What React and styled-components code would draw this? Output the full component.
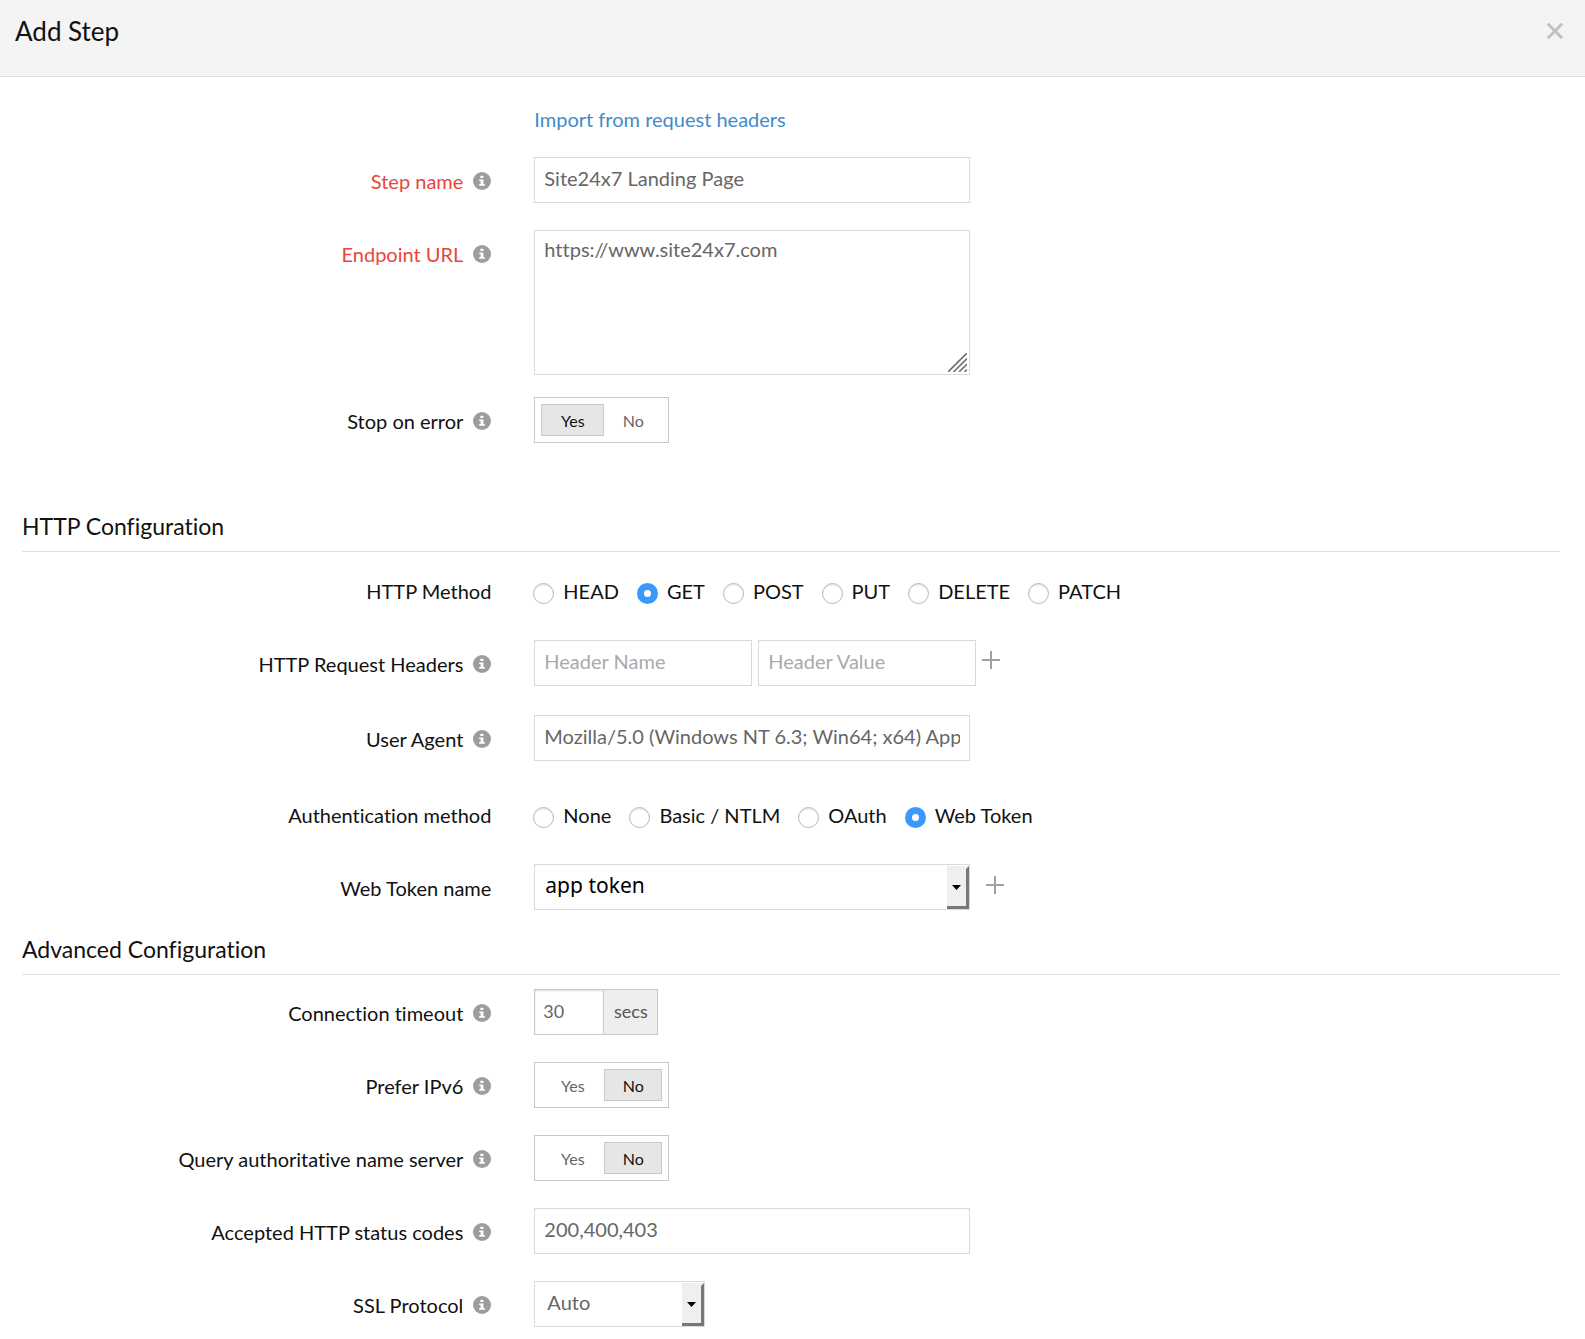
import React, { useState } from "react";
import styled, { createGlobalStyle } from "styled-components";

const GlobalStyle = createGlobalStyle`
  *, *::before, *::after { box-sizing: border-box; }
  body {
    margin: 0;
    background: #fff;
    color: #111;
    font-family: Lato, "Open Sans", sans-serif;
    font-size: 20px;
    line-height: 24px;
    font-variant-ligatures: none;
  }
  button, input, select, textarea {
    font: inherit;
    font-variant-ligatures: none;
    color: inherit;
    margin: 0;
    border-radius: 0;
  }
`;

const Header = styled.header`
  display: flex;
  align-items: flex-start;
  justify-content: space-between;
  height: 77px;
  padding: 16px 15px 0;
  background: #f4f4f4;
  border-bottom: 1px solid #e0e0e0;
`;

const Title = styled.h1`
  margin: 0;
  font-size: 26px;
  line-height: 30px;
  font-weight: 400;
`;

const IconButton = styled.button`
  display: flex;
  align-items: center;
  justify-content: center;
  width: 30px;
  height: 30px;
  padding: 0;
  border: 0;
  background: none;
  cursor: pointer;
`;

const ImportRow = styled.div`
  padding: 30px 0 26px calc(31% + 43px);
`;

const ImportLink = styled.a`
  color: #428bca;
  text-decoration: none;
`;

const Rows = styled.div`
  display: flex;
  flex-direction: column;
  gap: ${(p) => p.$gap}px;
`;

const Section = styled.section`
  margin-top: ${(p) => p.$top}px;
`;

const SectionTitle = styled.h2`
  margin: 0 25px 14px 22px;
  padding-bottom: 11px;
  border-bottom: 1px solid #e0e0e0;
  font-size: 23px;
  line-height: 28px;
  font-weight: 400;
`;

const Row = styled.div`
  display: grid;
  grid-template-columns: 31% 1fr;
  column-gap: 43px;
  align-items: start;
  padding-top: ${(p) => (p.$radios ? 9 : 0)}px;
  margin-bottom: ${(p) => (p.$tight ? -5 : 0)}px;
`;

const LabelCell = styled.div`
  display: flex;
  align-items: center;
  justify-content: flex-end;
  gap: 10px;
  height: ${(p) => (p.$radios ? 32 : 48)}px;
  margin-bottom: ${(p) => (p.$radios ? 0 : -2)}px;
  color: ${(p) => (p.$required ? "#e8463c" : "#111")};
  text-align: right;
`;

const InfoButton = styled.button`
  display: flex;
  padding: 0;
  border: 0;
  background: none;
  cursor: help;
`;

const Control = styled.div`
  display: flex;
  align-items: flex-start;
`;

const TextInput = styled.input`
  width: ${(p) => p.$width}px;
  height: 46px;
  padding: 0 9px 4px;
  border: 1px solid #d9d9d9;
  background: #fff;
  color: #666;
  outline: none;
  &::placeholder { color: #aaa; opacity: 1; }
`;

const AreaWrap = styled.div`
  position: relative;
  width: 436px;
`;

const TextArea = styled.textarea`
  display: block;
  width: 100%;
  height: 145px;
  padding: 6px 9px;
  border: 1px solid #d9d9d9;
  color: #666;
  outline: none;
  resize: none;
`;

const Grip = styled.svg`
  position: absolute;
  right: 3px;
  bottom: 3px;
`;

const ToggleBox = styled.div`
  display: flex;
  align-items: center;
  height: 46px;
  padding: 0 6px;
  border: 1px solid #c8c8c8;
`;

const ToggleButton = styled.button`
  width: ${(p) => p.$width}px;
  height: 32px;
  padding: 2px 0 0;
  border: 1px solid ${(p) => (p.$on ? "#c8c8c8" : "transparent")};
  background: ${(p) => (p.$on ? "#e6e6e6" : "transparent")};
  color: ${(p) => (p.$on ? "#111" : "#666")};
  font-size: 16px;
  line-height: 20px;
  cursor: pointer;
`;

const RadioList = styled.div`
  display: flex;
  flex-wrap: wrap;
  gap: 18px;
  height: 36px;
  margin-left: -1px;
`;

const RadioLabel = styled.label`
  display: flex;
  align-items: center;
  gap: 9px;
  height: 32px;
  cursor: pointer;
`;

const Radio = styled.input`
  appearance: none;
  width: 21px;
  height: 21px;
  margin: 4px 0 0;
  border: 1px solid #b9b9b9;
  border-radius: 50%;
  background: #fff;
  box-shadow: inset 0 1px 1px #ddd;
  &:checked {
    border: 7px solid #3b99fc;
    box-shadow: none;
  }
`;

const SelectWrap = styled.div`
  position: relative;
  width: ${(p) => p.$width}px;
`;

const Select = styled.select`
  appearance: none;
  display: block;
  width: 100%;
  height: 46px;
  padding: ${(p) => (p.$system ? "0 32px 4px 10px" : "0 32px 4px 12px")};
  border: 1px solid #d9d9d9;
  background: #fff;
  color: ${(p) => (p.$system ? "#000" : "#666")};
  font-family: ${(p) => (p.$system ? '"Noto Sans", sans-serif' : "inherit")};
  font-size: ${(p) => (p.$system ? 21 : 20)}px;
  outline: none;
`;

const SelectArrow = styled.span`
  position: absolute;
  top: 2px;
  right: 1px;
  bottom: 1px;
  display: flex;
  align-items: center;
  justify-content: center;
  width: 22px;
  border: solid #efefef;
  border-width: 3px 3px 3px 0;
  border-right-color: #777;
  border-bottom-color: #777;
  background: #efefef;
  pointer-events: none;
`;

const Spacer = styled.div`
  margin: ${(p) => p.$margin};
`;

const UnitGroup = styled.div`
  display: flex;
  width: 124px;
  height: 46px;
  border: 1px solid #c8c8c8;
`;

const UnitInput = styled.input`
  width: 68px;
  padding: 0 8px 2px;
  border: 0;
  background: #fff;
  box-shadow: inset 0 1px 2px #ddd;
  color: #666;
  font-size: 18px;
  outline: none;
`;

const Unit = styled.span`
  flex: 1;
  padding-top: 9px;
  border-left: 1px solid #d0d0d0;
  background: #eee;
  color: #555;
  font-size: 18px;
  text-align: center;
`;

const InfoIcon = () => (
  <svg width="18" height="18" viewBox="0 0 18 18" aria-hidden="true">
    <circle cx="9" cy="9" r="9" fill="#9d9d9d" />
    <path d="M7.4 3.8h3v2.3h-3zM6.2 7.4h4.2v4.6h1.4v1.7H6.2V12h1.4V9H6.2z" fill="#fff" />
  </svg>
);

const CloseIcon = () => (
  <svg width="18" height="18" viewBox="0 0 18 18" aria-hidden="true">
    <path d="M1.8 1.8l14.4 14.4M16.2 1.8L1.8 16.2" stroke="#c1c1c1" strokeWidth="3" />
  </svg>
);

const PlusIcon = () => (
  <svg width="18" height="18" viewBox="0 0 18 18" aria-hidden="true">
    <path d="M9 0v18M0 9h18" stroke="#a0a0a0" strokeWidth="2" />
  </svg>
);

const Caret = () => (
  <svg width="9" height="5" viewBox="0 0 9 5" aria-hidden="true">
    <path d="M0 0h9L4.5 5z" fill="#000" />
  </svg>
);

function Field({ label, htmlFor, info, required, radios, tight, children }) {
  return (
    <Row $radios={radios} $tight={tight}>
      <LabelCell $required={required} $radios={radios}>
        {htmlFor ? <label htmlFor={htmlFor}>{label}</label> : <span>{label}</span>}
        {info && (
          <InfoButton type="button" aria-label={`About ${label}`}>
            <InfoIcon />
          </InfoButton>
        )}
      </LabelCell>
      <Control>{children}</Control>
    </Row>
  );
}

function Toggle({ label, initial }) {
  const [value, setValue] = useState(initial);
  return (
    <ToggleBox role="group" aria-label={label}>
      <ToggleButton type="button" $width={63} $on={value === "Yes"} aria-pressed={value === "Yes"} onClick={() => setValue("Yes")}>
        Yes
      </ToggleButton>
      <ToggleButton type="button" $width={58} $on={value === "No"} aria-pressed={value === "No"} onClick={() => setValue("No")}>
        No
      </ToggleButton>
    </ToggleBox>
  );
}

function RadioGroup({ name, label, options, initial }) {
  return (
    <RadioList role="radiogroup" aria-label={label}>
      {options.map((option) => (
        <RadioLabel key={option}>
          <Radio type="radio" name={name} value={option} defaultChecked={option === initial} />
          {option}
        </RadioLabel>
      ))}
    </RadioList>
  );
}

function SelectBox({ id, width, system, option }) {
  return (
    <SelectWrap $width={width}>
      <Select id={id} $system={system}>
        <option>{option}</option>
      </Select>
      <SelectArrow>
        <Caret />
      </SelectArrow>
    </SelectWrap>
  );
}

export default function App() {
  return (
    <>
      <GlobalStyle />
      <Header>
        <Title>Add Step</Title>
        <IconButton type="button" aria-label="Close">
          <CloseIcon />
        </IconButton>
      </Header>
      <main>
        <ImportRow>
          <ImportLink href="#import">Import from request headers</ImportLink>
        </ImportRow>
        <Rows $gap={27}>
          <Field label="Step name" htmlFor="step-name" info required>
            <TextInput id="step-name" $width={436} defaultValue="Site24x7 Landing Page" />
          </Field>
          <Field label="Endpoint URL" htmlFor="endpoint" info required tight>
            <AreaWrap>
              <TextArea id="endpoint" spellCheck={false} defaultValue="https://www.site24x7.com" />
              <Grip width="19" height="19" viewBox="0 0 19 19" aria-hidden="true">
                <path d="M0 19L19 0M5.5 19L19 5.5M11 19l8-8M16.5 19l2.5-2.5" stroke="#707070" strokeWidth="1.6" />
              </Grip>
            </AreaWrap>
          </Field>
          <Field label="Stop on error" info>
            <Toggle label="Stop on error" initial="Yes" />
          </Field>
        </Rows>

        <Section $top={69}>
          <SectionTitle>HTTP Configuration</SectionTitle>
          <Rows $gap={29}>
            <Field label="HTTP Method" radios>
              <RadioGroup
                name="method"
                label="HTTP Method"
                options={["HEAD", "GET", "POST", "PUT", "DELETE", "PATCH"]}
                initial="GET"
              />
            </Field>
            <Field label="HTTP Request Headers" htmlFor="header-name" info>
              <TextInput id="header-name" $width={218} placeholder="Header Name" />
              <Spacer $margin="0 0 0 6px">
                <TextInput $width={218} placeholder="Header Value" aria-label="Header Value" />
              </Spacer>
              <Spacer $margin="5px 0 0 0">
                <IconButton type="button" aria-label="Add header">
                  <PlusIcon />
                </IconButton>
              </Spacer>
            </Field>
            <Field label="User Agent" htmlFor="user-agent" info>
              <TextInput
                id="user-agent"
                $width={436}
                defaultValue="Mozilla/5.0 (Windows NT 6.3; Win64; x64) AppleWebKit/537.36"
              />
            </Field>
            <Field label="Authentication method" radios>
              <RadioGroup
                name="auth"
                label="Authentication method"
                options={["None", "Basic / NTLM", "OAuth", "Web Token"]}
                initial="Web Token"
              />
            </Field>
            <Field label="Web Token name" htmlFor="web-token">
              <SelectBox id="web-token" width={436} system option="app token" />
              <Spacer $margin="6px 0 0 10px">
                <IconButton type="button" aria-label="Add web token">
                  <PlusIcon />
                </IconButton>
              </Spacer>
            </Field>
          </Rows>
        </Section>

        <Section $top={25}>
          <SectionTitle>Advanced Configuration</SectionTitle>
          <Rows $gap={27}>
            <Field label="Connection timeout" htmlFor="timeout" info>
              <UnitGroup>
                <UnitInput id="timeout" defaultValue="30" />
                <Unit>secs</Unit>
              </UnitGroup>
            </Field>
            <Field label="Prefer IPv6" info>
              <Toggle label="Prefer IPv6" initial="No" />
            </Field>
            <Field label="Query authoritative name server" info>
              <Toggle label="Query authoritative name server" initial="No" />
            </Field>
            <Field label="Accepted HTTP status codes" htmlFor="codes" info>
              <TextInput id="codes" $width={436} defaultValue="200,400,403" />
            </Field>
            <Field label="SSL Protocol" htmlFor="ssl" info>
              <SelectBox id="ssl" width={171} option="Auto" />
            </Field>
          </Rows>
        </Section>
      </main>
    </>
  );
}
